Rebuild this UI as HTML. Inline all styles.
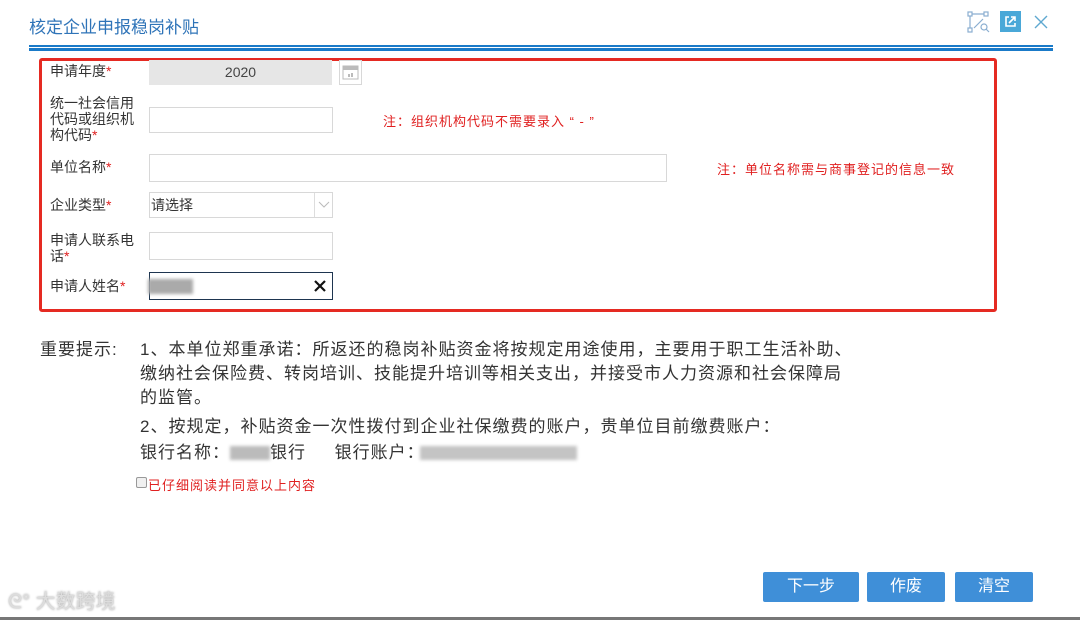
<!DOCTYPE html>
<html><head><meta charset="utf-8"><style>
*{margin:0;padding:0;box-sizing:border-box}
body{width:1080px;height:620px;background:#fff;position:relative;overflow:hidden;font-family:"Liberation Sans","Noto Sans CJK SC",sans-serif;color:#333}
.a{position:absolute;white-space:nowrap}
.l{font-size:14px;color:#333;line-height:16px}
.s{color:#e02020}
.in{position:absolute;border:1px solid #d8d8d8;background:#fff}
.n{font-size:13px;color:#e02020;letter-spacing:1px}
.t{font-size:17px;color:#333;line-height:24px;letter-spacing:1px}
.b{position:absolute;top:572px;height:30px;background:#3f8fd8;color:#fff;font-size:16px;text-align:center;line-height:30px;border-radius:2px}
.blur{position:absolute;background:#bbb;filter:blur(1.5px)}
</style></head><body>
<div class="a" style="left:29px;top:13px;font-size:17px;color:#2f74b8">核定企业申报稳岗补贴</div>
<svg class="a" style="left:966px;top:10px" width="26" height="24" viewBox="0 0 26 24" fill="none" stroke="#8aaed0" stroke-width="1.2"><rect x="2" y="2" width="4" height="4"/><rect x="18" y="2" width="4" height="4"/><rect x="2" y="18" width="4" height="4"/><path d="M6 4h12M4 6v12M8 18L17 9"/><circle cx="18" cy="17" r="3"/><path d="M20 19l3 3"/></svg>
<div class="a" style="left:1000px;top:11px;width:21px;height:21px;background:#4aa8d8"></div>
<svg class="a" style="left:1000px;top:11px" width="21" height="21" viewBox="0 0 21 21" fill="none" stroke="#fff" stroke-width="1.6"><path d="M9 6H6v9h9v-3M11 6h4v4M15 6l-6 6"/></svg>
<svg class="a" style="left:1034px;top:15px" width="14" height="14" viewBox="0 0 14 14" stroke="#5fa8d0" stroke-width="1.4"><path d="M1 1l12 12M13 1L1 13"/></svg>
<div class="a" style="left:29px;top:45px;width:1024px;height:2px;background:#1a7ac8"></div>
<div class="a" style="left:29px;top:48px;width:1024px;height:3px;background:#1a7ac8"></div>
<div class="a" style="left:39px;top:58px;width:958px;height:254px;border:3px solid #e52a22;border-radius:3px"></div>

<div class="a l" style="left:50px;top:63px">申请年度<span class="s">*</span></div>
<div class="in" style="left:149px;top:60px;width:183px;height:25px;background:#e6e6e6;border-color:#e6e6e6;text-align:center;font-size:14px;line-height:23px;color:#444">2020</div>
<div class="in" style="left:339px;top:60px;width:23px;height:25px"></div>
<svg class="a" style="left:342px;top:64px" width="17" height="16" viewBox="0 0 17 16" fill="#bbb"><rect x="1" y="2" width="15" height="13" fill="none" stroke="#bbb"/><rect x="1" y="2" width="15" height="4"/><rect x="6" y="10" width="2" height="3"/><rect x="9" y="9" width="2" height="4"/></svg>

<div class="a l" style="left:50px;top:95px">统一社会信用<br>代码或组织机<br>构代码<span class="s">*</span></div>
<div class="in" style="left:149px;top:107px;width:184px;height:26px"></div>
<div class="a n" style="left:383px;top:111px">注：组织机构代码不需要录入 “ - ”</div>

<div class="a l" style="left:50px;top:159px">单位名称<span class="s">*</span></div>
<div class="in" style="left:149px;top:154px;width:518px;height:28px"></div>
<div class="a n" style="left:717px;top:159px">注：单位名称需与商事登记的信息一致</div>

<div class="a l" style="left:50px;top:197px">企业类型<span class="s">*</span></div>
<div class="in" style="left:149px;top:192px;width:184px;height:26px;font-size:14px;line-height:24px;padding-left:1px;color:#333">请选择</div>
<div class="a" style="left:314px;top:193px;width:1px;height:24px;background:#ddd"></div>
<svg class="a" style="left:318px;top:201px" width="12" height="8"><path d="M1 1l5 5 5-5" fill="none" stroke="#bbb"/></svg>

<div class="a l" style="left:50px;top:232px">申请人联系电<br>话<span class="s">*</span></div>
<div class="in" style="left:149px;top:232px;width:184px;height:28px"></div>

<div class="a l" style="left:50px;top:278px">申请人姓名<span class="s">*</span></div>
<div class="in" style="left:149px;top:272px;width:184px;height:28px;border-color:#1e3550"></div>
<div class="blur" style="left:148px;top:279px;width:45px;height:15px;background:#aaa"></div>
<svg class="a" style="left:314px;top:280px" width="12" height="12" stroke="#111" stroke-width="2.2"><path d="M1 1l10 10M11 1L1 11"/></svg>

<div class="a t" style="left:40px;top:338px">重要提示:</div>
<div class="a t" style="left:140px;top:338px">1、本单位郑重承诺：所返还的稳岗补贴资金将按规定用途使用，主要用于职工生活补助、</div>
<div class="a t" style="left:140px;top:362px">缴纳社会保险费、转岗培训、技能提升培训等相关支出，并接受市人力资源和社会保障局</div>
<div class="a t" style="left:140px;top:386px">的监管。</div>
<div class="a t" style="left:140px;top:415px">2、按规定，补贴资金一次性拨付到企业社保缴费的账户，贵单位目前缴费账户：</div>
<div class="a t" style="left:140px;top:441px">银行名称：<span style="display:inline-block;width:40px"></span>银行&nbsp;&nbsp;&nbsp;&nbsp;&nbsp;银行账户：</div>
<div class="blur" style="left:230px;top:446px;width:40px;height:14px"></div>
<div class="blur" style="left:420px;top:446px;width:157px;height:14px;background:#c4c4c4"></div>
<div class="a" style="left:136px;top:477px;width:11px;height:11px;border:1px solid #999;border-radius:2px;background:#f0f0f0"></div>
<div class="a n" style="left:148px;top:475px">已仔细阅读并同意以上内容</div>

<div class="a" style="left:8px;top:585px;font-size:20px;color:#ddd;text-shadow:0 0 2px #999">ᘓ° 大数跨境</div>
<div class="b" style="left:763px;width:96px">下一步</div>
<div class="b" style="left:867px;width:78px">作废</div>
<div class="b" style="left:955px;width:78px">清空</div>
<div class="a" style="left:0;top:617px;width:1080px;height:3px;background:#777"></div>
</body></html>
